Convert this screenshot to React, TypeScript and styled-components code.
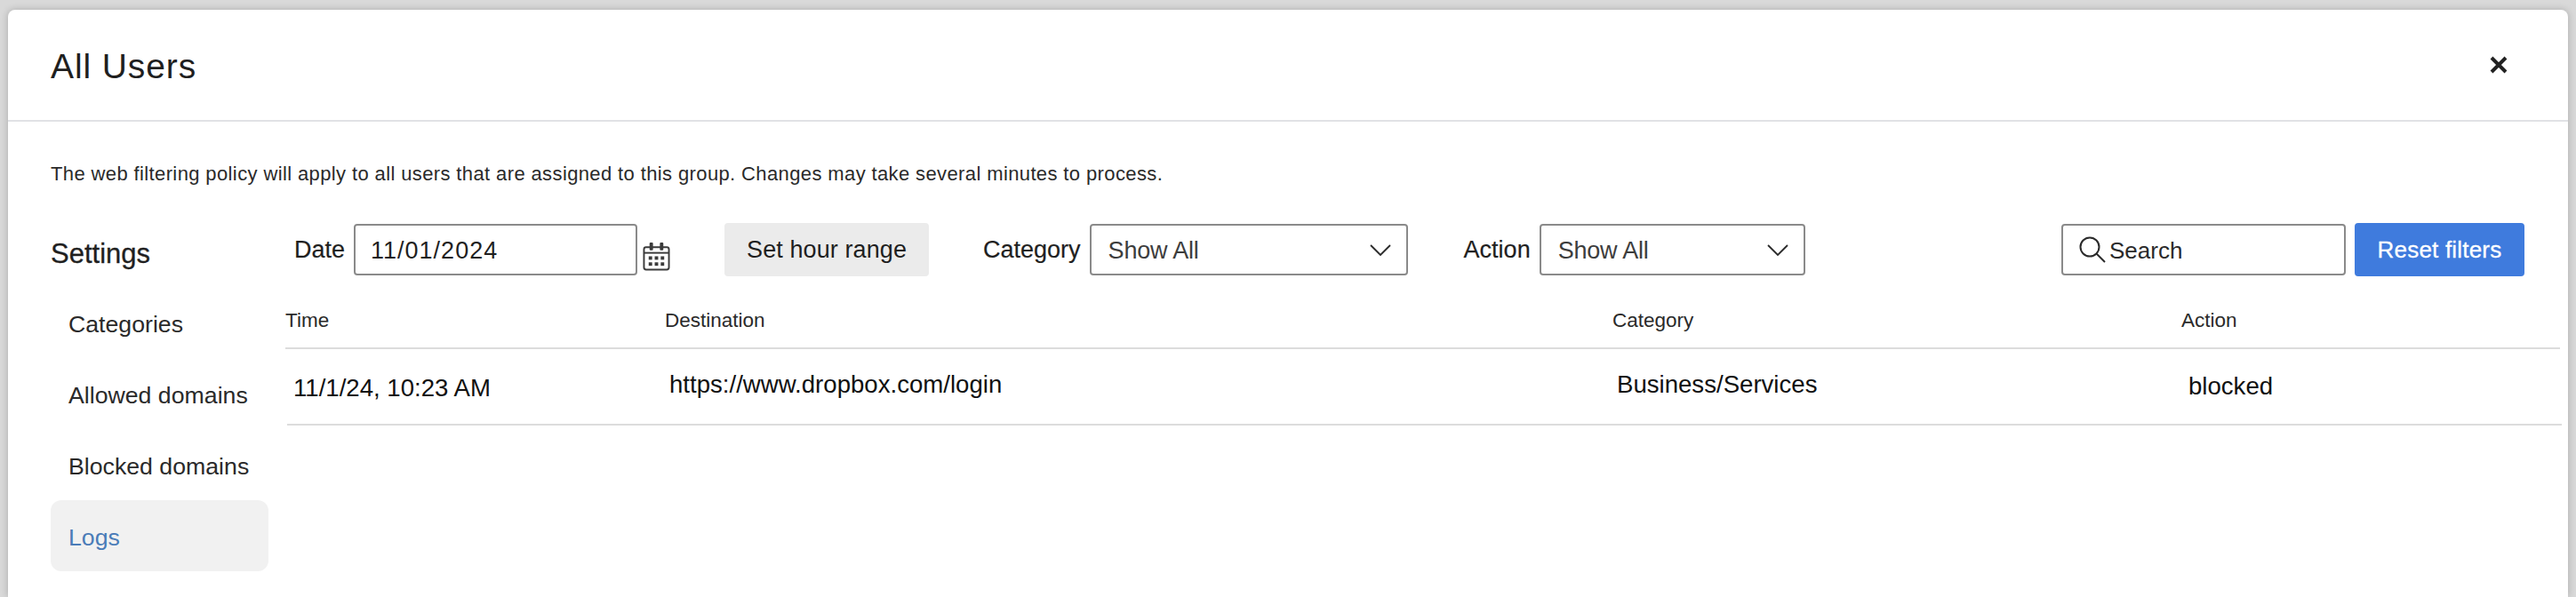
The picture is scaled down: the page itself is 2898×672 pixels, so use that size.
import styled, { createGlobalStyle } from "styled-components";

const GlobalStyle = createGlobalStyle`
    html, body {
        margin: 0;
        padding: 0;
        background-color: #d9d9d9;
        font-family: "Liberation Sans", Arial, sans-serif;
        color: #1f1f1f;
    }
`;

const NAV_ITEMS = ["Categories", "Allowed domains", "Blocked domains", "Logs"];
const ACTIVE_ITEM = "Logs";

const LOG_ROW = {
    time: "11/1/24, 10:23 AM",
    destination: "https://www.dropbox.com/login",
    category: "Business/Services",
    action: "blocked",
};

const CalendarIcon = () => (
    <svg width="31" height="33" viewBox="0 0 32 34" fill="none">
        <rect x="1.5" y="6.5" width="29" height="26" rx="2.5" stroke="#3a3a3a" strokeWidth="2" />
        <line x1="1.5" y1="13" x2="30.5" y2="13" stroke="#3a3a3a" strokeWidth="2" />
        <rect x="8" y="1" width="4" height="9" rx="1" fill="#3a3a3a" />
        <rect x="20" y="1" width="4" height="9" rx="1" fill="#3a3a3a" />
        <rect x="7" y="17" width="4" height="4" fill="#3a3a3a" />
        <rect x="14" y="17" width="4" height="4" fill="#3a3a3a" />
        <rect x="21" y="17" width="4" height="4" fill="#3a3a3a" />
        <rect x="7" y="24" width="4" height="4" fill="#3a3a3a" />
        <rect x="14" y="24" width="4" height="4" fill="#3a3a3a" />
        <rect x="21" y="24" width="4" height="4" fill="#3a3a3a" />
    </svg>
);

const ChevronIcon = () => (
    <svg width="24" height="13" viewBox="0 0 24 13" fill="none">
        <path d="M1 1 L12 12 L23 1" stroke="#2a2a2a" strokeWidth="1.8" />
    </svg>
);

const SearchIcon = () => (
    <svg width="30" height="30" viewBox="0 0 30 30" fill="none">
        <circle cx="12" cy="12" r="10.5" stroke="#2a2a2a" strokeWidth="2" />
        <line x1="19.5" y1="19.5" x2="29" y2="29" stroke="#2a2a2a" strokeWidth="2" />
    </svg>
);

const CloseIcon = () => (
    <svg width="20" height="20" viewBox="0 0 20 20" fill="none">
        <path d="M2 2 L18 18 M18 2 L2 18" stroke="#222" strokeWidth="4" />
    </svg>
);

export default function App() {
    return (
        <>
            <GlobalStyle />
            <Page>
                <Modal>
                    <Header>
                        <Title>All Users</Title>
                        <CloseButton>
                            <CloseIcon />
                        </CloseButton>
                    </Header>
                    <Body>
                        <Description>
                            The web filtering policy will apply to all users that are assigned to this group. Changes may take several minutes to process.
                        </Description>
                        <Content>
                            <Sidebar>
                                <SidebarTitle>Settings</SidebarTitle>
                                {NAV_ITEMS.map((item) => (
                                    <NavItem key={item} $active={item === ACTIVE_ITEM}>
                                        {item}
                                    </NavItem>
                                ))}
                            </Sidebar>
                            <Main>
                                <Toolbar>
                                    <FilterLabel>Date</FilterLabel>
                                    <DateInput>11/01/2024</DateInput>
                                    <CalendarSlot>
                                        <CalendarIcon />
                                    </CalendarSlot>
                                    <HourButton>Set hour range</HourButton>
                                    <FilterLabel $offset={61}>Category</FilterLabel>
                                    <SelectBox $width={358}>
                                        <SelectText>Show All</SelectText>
                                        <ChevronIcon />
                                    </SelectBox>
                                    <FilterLabel $offset={63}>Action</FilterLabel>
                                    <SelectBox $width={299}>
                                        <SelectText>Show All</SelectText>
                                        <ChevronIcon />
                                    </SelectBox>
                                    <SearchBox>
                                        <SearchIcon />
                                        <SelectText>Search</SelectText>
                                    </SearchBox>
                                    <ResetButton>Reset filters</ResetButton>
                                </Toolbar>
                                <HeaderRow>
                                    <HeaderCell>Time</HeaderCell>
                                    <HeaderCell>Destination</HeaderCell>
                                    <HeaderCell>Category</HeaderCell>
                                    <HeaderCell>Action</HeaderCell>
                                </HeaderRow>
                                <DataRow>
                                    <DataCell $pad={7} $drop={8}>{LOG_ROW.time}</DataCell>
                                    <DataCell $pad={5} $drop={0}>{LOG_ROW.destination}</DataCell>
                                    <DataCell $pad={5} $drop={0}>{LOG_ROW.category}</DataCell>
                                    <DataCell $pad={8} $drop={3}>{LOG_ROW.action}</DataCell>
                                </DataRow>
                            </Main>
                        </Content>
                    </Body>
                </Modal>
            </Page>
        </>
    );
}

const Page = styled.div`
    height: 100vh;
    box-sizing: border-box;
    padding: 11px 9px 0;
    overflow: hidden;
    background-color: #d9d9d9;
`;

const Modal = styled.div`
    height: 100%;
    background-color: white;
    border-radius: 8px 8px 0 0;
    box-shadow: 0 0 8px rgba(0, 0, 0, 0.22);
    overflow: hidden;
`;

const Header = styled.div`
    height: 126px;
    box-sizing: border-box;
    display: flex;
    justify-content: space-between;
    align-items: center;
    padding: 0 68px 0 48px;
    border-bottom: 2px solid #e1e2e5;
`;

const Title = styled.h1`
    margin: 0;
    padding-top: 3px;
    font-size: 39px;
    font-weight: 400;
    letter-spacing: 0.9px;
    color: #1f1f1f;
`;

const CloseButton = styled.div`
    display: flex;
`;

const Body = styled.div`
    padding: 44px 0 0 48px;
`;

const Description = styled.p`
    margin: 0 0 40px;
    font-size: 22px;
    line-height: 30px;
    letter-spacing: 0.38px;
    color: #2a2a2a;
`;

const Content = styled.div`
    display: flex;
`;

const Sidebar = styled.div`
    width: 245px;
    flex-shrink: 0;
    margin-right: 19px;
`;

const SidebarTitle = styled.div`
    height: 72px;
    padding-top: 18px;
    box-sizing: border-box;
    font-size: 31px;
    line-height: 34px;
    font-weight: 400;
    -webkit-text-stroke: 0.3px #1f1f1f;
`;

const NavItem = styled.div<{ $active?: boolean }>`
    height: 80px;
    box-sizing: border-box;
    display: flex;
    align-items: center;
    padding: 4px 0 0 20px;
    border-radius: 12px;
    font-size: 26.7px;
    color: ${(props) => (props.$active ? "#4a7cb8" : "#2a2a2a")};
    background-color: ${(props) => (props.$active ? "#f1f1f1" : "transparent")};
`;

const Main = styled.div`
    width: 2559px;
    flex-shrink: 0;
`;

const Toolbar = styled.div`
    height: 60px;
    display: flex;
    align-items: center;
    padding: 0 40px 0 10px;
`;

const FilterLabel = styled.span<{ $offset?: number }>`
    margin-left: ${(props) => props.$offset ?? 0}px;
    margin-right: 10px;
    font-size: 27px;
    white-space: nowrap;
    -webkit-text-stroke: 0.2px #1f1f1f;
`;

const FieldBox = styled.div`
    height: 58px;
    box-sizing: border-box;
    display: flex;
    align-items: center;
    border: 2px solid #8a8a8a;
    border-radius: 4px;
    background-color: white;
    font-size: 27px;
`;

const DateInput = styled(FieldBox)`
    width: 319px;
    padding: 2px 0 0 17px;
    letter-spacing: 1px;
    color: #1f1f1f;
`;

const CalendarSlot = styled.div`
    display: flex;
    margin: 14px 0 0 6px;
`;

const HourButton = styled.div`
    width: 230px;
    height: 60px;
    margin-left: 61px;
    display: flex;
    align-items: center;
    justify-content: center;
    border-radius: 4px;
    background-color: #ebebeb;
    font-size: 27px;
    letter-spacing: 0.1px;
    color: #1f1f1f;
`;

const SelectBox = styled(FieldBox)<{ $width: number }>`
    width: ${(props) => props.$width}px;
    justify-content: space-between;
    padding: 0 17px 0 19px;
    color: #3d3d3d;
    letter-spacing: -0.2px;
`;

const SelectText = styled.span`
    padding-top: 3px;
`;

const SearchBox = styled(FieldBox)`
    width: 320px;
    margin-left: auto;
    padding-left: 18px;
    gap: 4px;
    color: #2a2a2a;
    font-size: 26px;
`;

const ResetButton = styled.div`
    width: 191px;
    height: 60px;
    margin-left: 10px;
    display: flex;
    align-items: center;
    justify-content: center;
    border-radius: 4px;
    background-color: #3f7bdd;
    color: white;
    font-size: 26px;
    letter-spacing: 0.2px;
    -webkit-text-stroke: 0.3px white;
`;

const HeaderRow = styled.div`
    height: 82px;
    box-sizing: border-box;
    display: grid;
    grid-template-columns: 427px 1066px 640px 1fr;
    align-items: center;
    padding-top: 20px;
    border-bottom: 2px solid #dcdcdc;
`;

const HeaderCell = styled.div`
    font-size: 22.5px;
    color: #2a2a2a;
`;

const DataRow = styled.div`
    height: 86px;
    box-sizing: border-box;
    margin-left: 2px;
    margin-right: -2px;
    padding-bottom: 4px;
    display: grid;
    grid-template-columns: 425px 1066px 640px 1fr;
    align-items: center;
    border-bottom: 2px solid #dcdcdc;
`;

const DataCell = styled.div<{ $pad: number; $drop: number }>`
    padding-left: ${(props) => props.$pad}px;
    padding-top: ${(props) => props.$drop}px;
    font-size: 27.6px;
    color: #111;
`;
